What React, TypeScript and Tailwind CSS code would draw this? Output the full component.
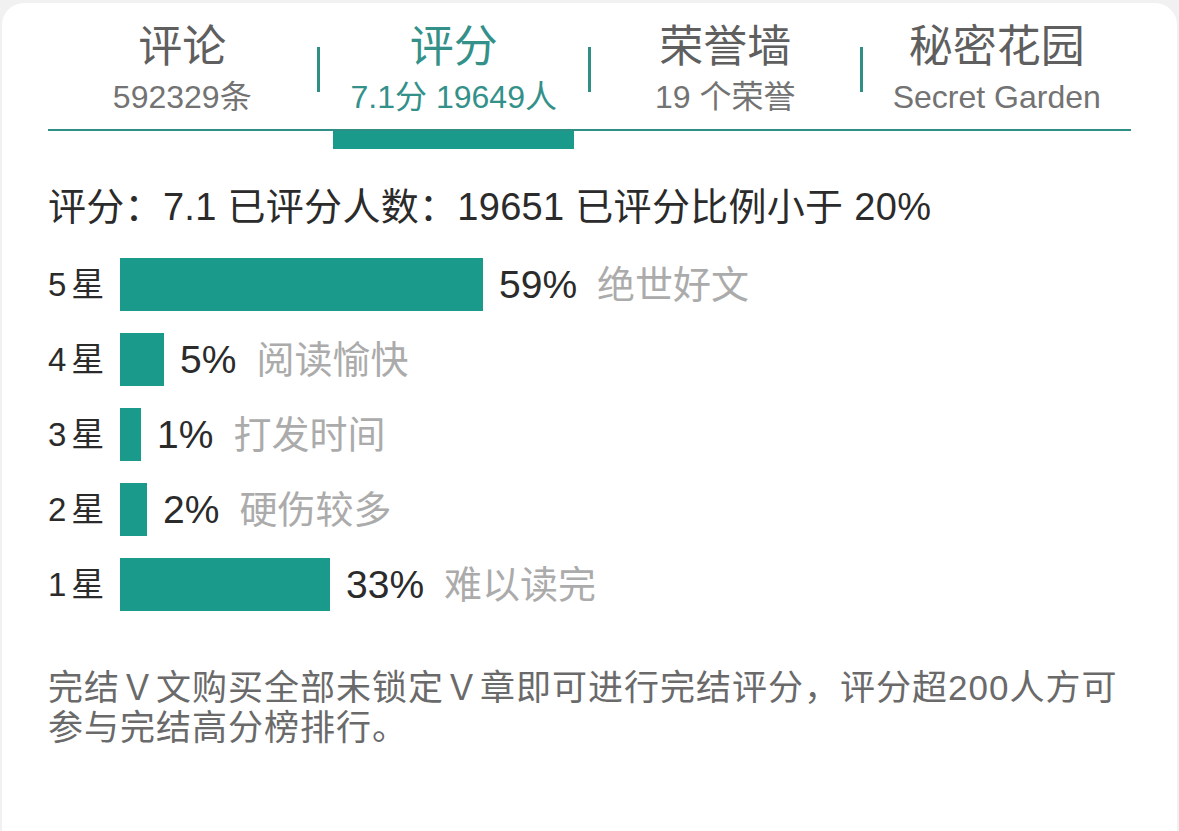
import React from "react";

const FONT = { fontFamily: '"Liberation Sans", "Noto Sans CJK SC", sans-serif' };

const tabs = [
  { title: "评论", sub: "592329条", active: false },
  { title: "评分", sub: "7.1分 19649人", active: true },
  { title: "荣誉墙", sub: "19 个荣誉", active: false },
  { title: "秘密花园", sub: "Secret Garden", active: false },
];

const rows = [
  { star: "5", pct: "59%", w: 363, desc: "绝世好文" },
  { star: "4", pct: "5%", w: 44, desc: "阅读愉快" },
  { star: "3", pct: "1%", w: 21, desc: "打发时间" },
  { star: "2", pct: "2%", w: 27, desc: "硬伤较多" },
  { star: "1", pct: "33%", w: 210, desc: "难以读完" },
];

export default function App() {
  return (
    <div className="w-[1179px] h-[831px] bg-[#f1f1f1] pt-[3px] px-[2px] overflow-hidden" style={FONT}>
      <div className="h-full bg-white rounded-t-[22px] px-[46px] pt-[18px]">
        {/* Tabs */}
        <div className="flex border-b-[2px] border-[#2f8f84] pb-[14px]">
          {tabs.map((t, i) => (
            <React.Fragment key={t.title}>
              {i > 0 && <div className="w-[3px] h-[45px] bg-[#2f8f84] self-center mt-[2px]" />}
              <div className="flex-1 flex flex-col items-center">
                <div
                  className={`text-[44px] leading-[52px] ${t.active ? "text-[#33918a]" : "text-[#5f5f5f]"}`}
                >
                  {t.title}
                </div>
                <div
                  className={`mt-[6px] text-[32px] leading-[36px] ${t.active ? "text-[#33918a]" : "text-[#737373]"}`}
                >
                  {t.sub}
                </div>
              </div>
            </React.Fragment>
          ))}
        </div>
        {/* Active indicator */}
        <div className="flex">
          <div className="flex-1" />
          <div className="w-[3px]" />
          <div className="flex-1 flex justify-center">
            <div className="w-[241px] h-[18px] bg-[#199a8b]" />
          </div>
          <div className="w-[3px]" />
          <div className="flex-1" />
          <div className="w-[3px]" />
          <div className="flex-1" />
        </div>

        {/* Summary */}
        <div className="mt-[34px] text-[38px] leading-[48px] tracking-[0.3px] text-[#2b2b2b] whitespace-nowrap">
          评分：7.1 已评分人数：19651 已评分比例小于 20%
        </div>

        {/* Bars */}
        <div className="mt-[27px] flex flex-col gap-[22px]">
          {rows.map((r) => (
            <div key={r.star} className="flex items-center h-[53px]">
              <div className="w-[72px] text-[33px] leading-none text-[#2b2b2b] whitespace-nowrap">
                {r.star}
                <span className="ml-[5px]">星</span>
              </div>
              <div className="h-[53px] bg-[#199a8b]" style={{ width: r.w }} />
              <div className="ml-[16px] text-[39px] leading-none text-[#2b2b2b]">{r.pct}</div>
              <div className="ml-[20px] text-[38px] leading-none text-[#ababab]">{r.desc}</div>
            </div>
          ))}
        </div>

        {/* Footer */}
        <div className="mt-[57px] text-[35px] leading-[40px] tracking-[1px] text-[#6a6a6a]">
          完结Ｖ文购买全部未锁定Ｖ章即可进行完结评分，评分超200人方可参与完结高分榜排行。
        </div>
      </div>
    </div>
  );
}
